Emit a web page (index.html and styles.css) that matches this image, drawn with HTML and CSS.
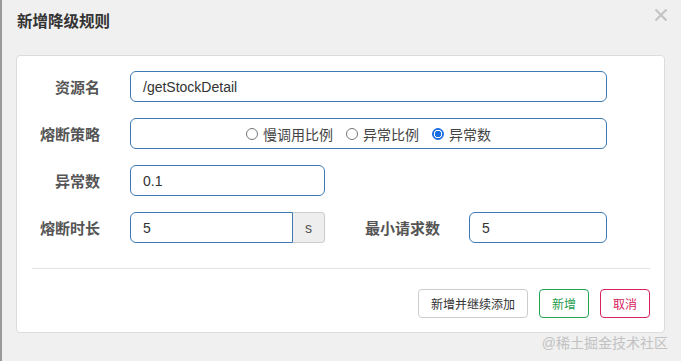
FILE: index.html
```html
<!DOCTYPE html>
<html lang="zh-CN">
<head>
    <meta charset="UTF-8">
    <title>新增降级规则</title>
    <link rel="stylesheet" href="styles.css">
</head>
<body>
    <div class="dialog">
        <div class="dialog-header">
            <h3 class="dialog-title">新增降级规则</h3>
            <span class="close">
                <svg width="14" height="14" viewBox="0 0 14 14">
                    <path d="M1.5 1.5 L12.5 12.5 M12.5 1.5 L1.5 12.5" stroke="#c4c4c4" stroke-width="2.2" fill="none"/>
                </svg>
            </span>
        </div>

        <div class="panel">
            <form class="rule-form">
                <div class="form-row">
                    <label class="form-label">资源名</label>
                    <div class="input wide">/getStockDetail</div>
                </div>

                <div class="form-row">
                    <label class="form-label">熔断策略</label>
                    <div class="input wide radio-box">
                        <label class="radio"><input type="radio" name="grade"> 慢调用比例</label>
                        <label class="radio"><input type="radio" name="grade"> 异常比例</label>
                        <label class="radio"><input type="radio" name="grade" checked> 异常数</label>
                    </div>
                </div>

                <div class="form-row">
                    <label class="form-label">异常数</label>
                    <div class="input mid">0.1</div>
                </div>

                <div class="form-row">
                    <label class="form-label">熔断时长</label>
                    <div class="input-group">
                        <div class="input grouped">5</div>
                        <span class="addon">s</span>
                    </div>
                    <label class="form-label second">最小请求数</label>
                    <div class="input small">5</div>
                </div>
            </form>

            <hr class="divider">

            <div class="actions">
                <button class="btn">新增并继续添加</button>
                <button class="btn btn-ok">新增</button>
                <button class="btn btn-cancel">取消</button>
            </div>
        </div>

        <div class="watermark">@稀土掘金技术社区</div>
    </div>
</body>
</html>
```

FILE: styles.css
```css
body {
    margin: 0;
    padding: 0;
    background-color: #f0f0f0;
    font-family: "Liberation Sans", "Noto Sans CJK SC", sans-serif;
    color: #333;
}

.dialog {
    position: relative;
    height: 361px;
    border-left: 2px solid #9a9a9a;
    box-sizing: border-box;
}

/* Header */
.dialog-header {
    height: 55px;
    display: flex;
    justify-content: space-between;
    align-items: flex-start;
    padding: 0 13px 0 15px;
    box-sizing: border-box;
}
.dialog-title {
    margin: 12px 0 0;
    font-size: 15.5px;
    line-height: 20px;
    font-weight: bold;
    color: #333;
}
.close {
    margin-top: 8px;
    display: flex;
}

/* Panel */
.panel {
    margin: 0 16px 0 14px;
    background-color: #fff;
    border: 1px solid #dcdcdc;
    border-radius: 4px;
    padding: 15px 14px 14px 15px;
}

.rule-form {
    display: flex;
    flex-direction: column;
    gap: 16px;
    margin: 0;
}
.form-row {
    display: flex;
    align-items: center;
    height: 31px;
}
.form-label {
    width: 68px;
    margin-right: 30px;
    text-align: right;
    font-size: 15px;
    font-weight: bold;
    color: #555;
}
.form-label.second {
    width: 115px;
    margin-right: 29px;
}

.input {
    height: 31px;
    box-sizing: border-box;
    border: 1px solid #3d79b3;
    border-radius: 6px;
    padding: 0 12px;
    display: flex;
    align-items: center;
    font-size: 14px;
    color: #333;
}
.input.wide { width: 477px; }
.input.mid { width: 195px; }
.input.small { width: 138px; }

.input-group {
    display: flex;
    width: 195px;
}
.input.grouped {
    width: 163px;
    border-radius: 6px 0 0 6px;
}
.addon {
    width: 32px;
    height: 31px;
    box-sizing: border-box;
    background-color: #eee;
    border: 1px solid #ccc;
    border-left: none;
    border-radius: 0 4px 4px 0;
    display: flex;
    align-items: center;
    justify-content: center;
    font-size: 14px;
    color: #555;
}

.radio-box {
    justify-content: center;
    gap: 13px;
}
.radio {
    display: flex;
    align-items: center;
    gap: 5px;
    font-size: 14px;
    color: #444;
}
.radio input {
    appearance: none;
    -webkit-appearance: none;
    margin: 0;
    width: 12px;
    height: 12px;
    border: 1px solid #777;
    border-radius: 50%;
    background: #fff;
}
.radio input:checked {
    border: 1px solid #1a6fe0;
    background: radial-gradient(circle, #1a6fe0 0, #1a6fe0 3px, #fff 3.5px, #fff 4px, #1a6fe0 4.5px);
}

.divider {
    border: none;
    border-top: 1px solid #e2e2e2;
    margin: 25px 0 20px;
}

/* Buttons */
.actions {
    display: flex;
    justify-content: flex-end;
    gap: 11px;
}
.btn {
    height: 29px;
    padding: 0 12px;
    font-family: "Liberation Sans", "Noto Sans CJK SC", sans-serif;
    font-size: 12px;
    background-color: #fff;
    border: 1px solid #ccc;
    border-radius: 4px;
    color: #333;
}
.btn-ok {
    border-color: #23a455;
    color: #1f9d4f;
}
.btn-cancel {
    border-color: #d6225f;
    color: #d6225f;
}

.watermark {
    position: absolute;
    right: 13px;
    bottom: 9px;
    font-size: 14px;
    color: #c2c2c2;
}
```
